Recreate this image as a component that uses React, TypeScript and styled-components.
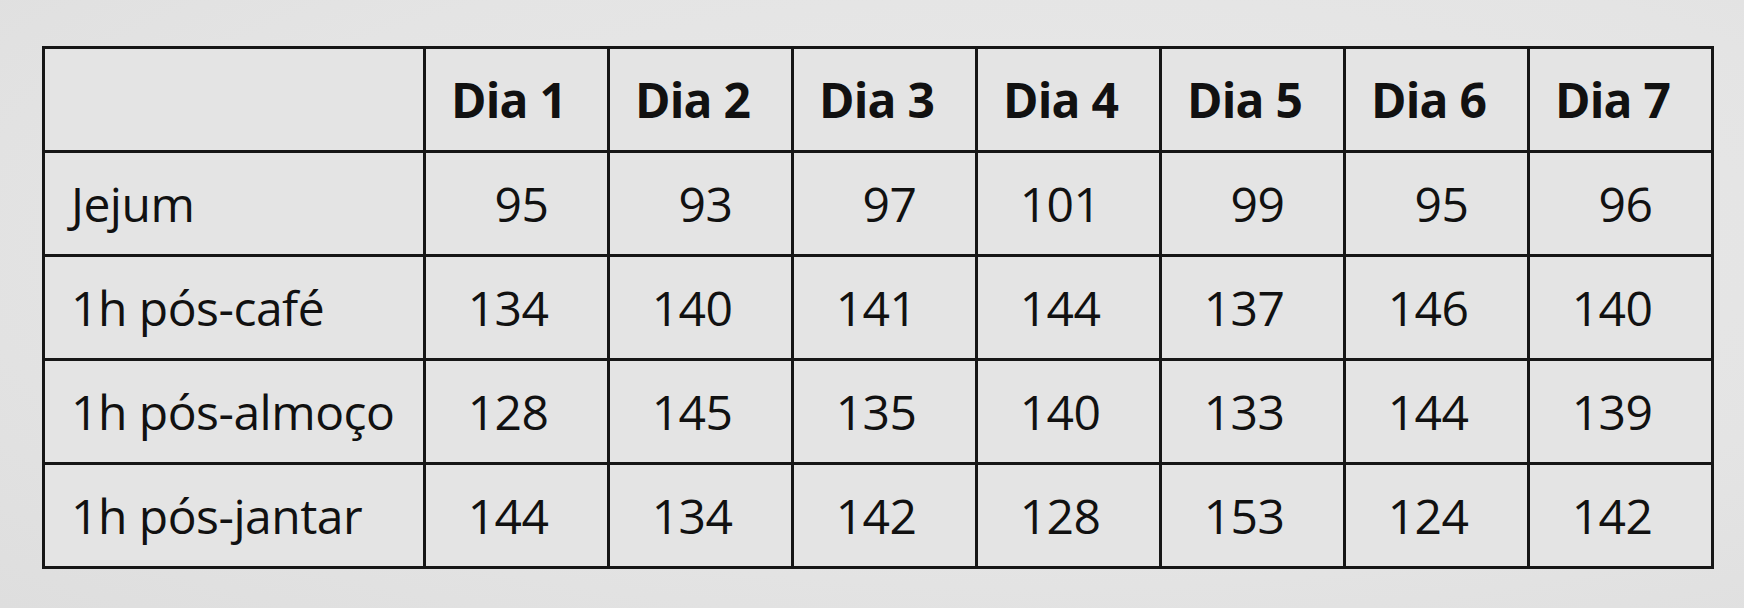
import React from "react";
import styled, { createGlobalStyle } from "styled-components";

const Global = createGlobalStyle`
  html, body {
    margin: 0;
    padding: 0;
    background: #e5e5e5;
  }
  body {
    font-family: "Open Sans", "Noto Sans", "Liberation Sans", sans-serif;
    color: #111111;
  }
`;

const Page = styled.div`
  width: 1744px;
  height: 608px;
  box-sizing: border-box;
  padding: 46px 0 0 42px;
  background: radial-gradient(ellipse at 60% 40%, #e9e9e9 0%, #e4e4e4 60%, #dedede 100%);
`;

const Table = styled.table`
  width: 1671px;
  height: 523px;
  border-collapse: collapse;
  table-layout: fixed;
  border: 3px solid #161616;
`;

const Col = styled.col<{ $w: number }>`
  width: ${(p) => p.$w}px;
`;

const Cell = styled.td`
  border: 3px solid #161616;
  padding: 0 18px 0 0;
  height: 104px;
  box-sizing: border-box;
  text-align: center;
  vertical-align: middle;
  font-size: 48px;
  letter-spacing: -0.5px;
  line-height: 1;
  background: #e4e4e4;
`;

const HeadCell = styled(Cell).attrs({ as: "th" })`
  font-weight: 700;
  letter-spacing: -0.8px;
  padding: 0 16px 0 0;
`;

const LabelCell = styled(Cell)`
  text-align: left;
  padding: 0 0 0 26px;
`;

const Num = styled.span`
  display: inline-block;
  width: 82px;
  text-align: right;
`;

const days = ["Dia 1", "Dia 2", "Dia 3", "Dia 4", "Dia 5", "Dia 6", "Dia 7"];

const rows: { label: string; values: number[] }[] = [
  { label: "Jejum", values: [95, 93, 97, 101, 99, 95, 96] },
  { label: "1h pós-café", values: [134, 140, 141, 144, 137, 146, 140] },
  { label: "1h pós-almoço", values: [128, 145, 135, 140, 133, 144, 139] },
  { label: "1h pós-jantar", values: [144, 134, 142, 128, 153, 124, 142] },
];

export default function App() {
  return (
    <>
      <Global />
      <Page>
        <Table>
          <colgroup>
            <Col $w={381} />
            {days.map((d) => (
              <Col key={d} $w={184} />
            ))}
          </colgroup>
          <thead>
            <tr>
              <Cell />
              {days.map((d) => (
                <HeadCell key={d}>{d}</HeadCell>
              ))}
            </tr>
          </thead>
          <tbody>
            {rows.map((r) => (
              <tr key={r.label}>
                <LabelCell>{r.label}</LabelCell>
                {r.values.map((v, i) => (
                  <Cell key={i}>
                    <Num>{v}</Num>
                  </Cell>
                ))}
              </tr>
            ))}
          </tbody>
        </Table>
      </Page>
    </>
  );
}
